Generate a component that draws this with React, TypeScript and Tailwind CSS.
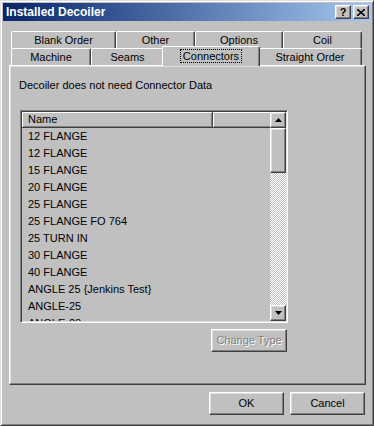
import React from "react";

const raised =
  "border border-t-white border-l-white border-r-[#404040] border-b-[#404040] shadow-[inset_-1px_-1px_0_#808080,inset_1px_1px_0_#dfdfdf]";
const sunken =
  "border border-t-[#808080] border-l-[#808080] border-r-white border-b-white shadow-[inset_1px_1px_0_#404040,inset_-1px_-1px_0_#dfdfdf]";

const tabBase =
  "h-[17px] flex items-center justify-center border-t border-l border-r border-t-white border-l-white border-r-[#404040] rounded-t-[2px] shadow-[inset_-1px_0_0_#808080] bg-[#c0c0c0]";

const rows = [
  "12 FLANGE",
  "12 FLANGE",
  "15 FLANGE",
  "20 FLANGE",
  "25 FLANGE",
  "25 FLANGE FO 764",
  "25 TURN IN",
  "30 FLANGE",
  "40 FLANGE",
  "ANGLE 25 {Jenkins Test}",
  "ANGLE-25",
  "ANGLE-28",
];

const Arrow = ({ up }: { up?: boolean }) => (
  <svg width="7" height="4" viewBox="0 0 7 4">
    {up ? <polygon points="3.5,0 7,4 0,4" fill="#000" /> : <polygon points="0,0 7,0 3.5,4" fill="#000" />}
  </svg>
);

const App: React.FC = () => {
  return (
    <div
      className="w-[374px] h-[426px] bg-[#c0c0c0] border border-t-[#dfdfdf] border-l-[#dfdfdf] border-r-[#404040] border-b-[#404040] shadow-[inset_1px_1px_0_#fff,inset_-1px_-1px_0_#808080] p-[2px] flex flex-col text-[11px] text-black"
      style={{ fontFamily: '"Liberation Sans", Arial, sans-serif' }}
    >
      {/* TITLE BAR */}
      <div className="h-[18px] flex items-center justify-between bg-gradient-to-r from-[#0a246a] to-[#a6caf0] pl-[3px] pr-[2px]">
        <span className="text-white font-bold text-[12px] leading-none">Installed Decoiler</span>
        <div className="flex gap-[2px]">
          <div className={`w-[16px] h-[14px] bg-[#c0c0c0] flex items-center justify-center ${raised}`}>
            <span className="font-bold text-[11px] leading-none">?</span>
          </div>
          <div className={`w-[16px] h-[14px] bg-[#c0c0c0] flex items-center justify-center ${raised}`}>
            <svg width="8" height="7" viewBox="0 0 8 7">
              <path d="M0 0 L8 7 M8 0 L0 7" stroke="#000" strokeWidth="1.6" />
            </svg>
          </div>
        </div>
      </div>

      {/* TABS */}
      <div className="mt-[10px] ml-[6px] flex flex-col">
        <div className="ml-[2px] flex w-[351px]">
          <div className={`${tabBase} w-[105px]`}>Blank Order</div>
          <div className={`${tabBase} w-[79px]`}>Other</div>
          <div className={`${tabBase} w-[88px]`}>Options</div>
          <div className={`${tabBase} w-[79px]`}>Coil</div>
        </div>
        <div className="ml-[2px] flex items-end w-[351px] h-[17px] relative z-10">
          <div className={`${tabBase} w-[80px]`}>Machine</div>
          <div className={`${tabBase} w-[73px]`}>Seams</div>
          <div className={`${tabBase} w-[98px] h-[20px] -mx-[2px] -mb-[1px] z-10 items-start pt-[2px]`}>
            <span className="border border-dotted border-black px-[2px] leading-[12px]">Connectors</span>
          </div>
          <div className={`${tabBase} w-[104px]`}>Straight Order</div>
        </div>

        {/* PANEL */}
        <div className={`w-[357px] h-[320px] ${raised} flex flex-col`}>
          <div className="mt-[11px] ml-[9px]">Decoiler does not need Connector Data</div>

          <div className="mt-[16px] ml-[10px] flex flex-col items-start">
            <div className={`w-[268px] h-[213px] ${sunken} p-[1px] flex`}>
              <div className="flex-1 flex flex-col overflow-hidden">
                <div className="flex h-[16px]">
                  <div className="w-[191px] border-r border-b border-r-[#404040] border-b-[#404040] shadow-[inset_1px_1px_0_#fff,inset_-1px_-1px_0_#808080] pl-[6px] flex items-center">
                    Name
                  </div>
                  <div className="flex-1 border-b border-b-[#404040] shadow-[inset_1px_1px_0_#fff,inset_0_-1px_0_#808080]" />
                </div>
                <div className="flex flex-col">
                  {rows.map((r, i) => (
                    <div key={i} className="h-[17px] pl-[6px] flex items-center whitespace-nowrap">
                      {r}
                    </div>
                  ))}
                </div>
              </div>
              <div className="w-[16px] flex flex-col">
                <div className={`h-[16px] bg-[#c0c0c0] flex items-center justify-center ${raised}`}>
                  <Arrow up />
                </div>
                <div className={`h-[45px] bg-[#c0c0c0] ${raised}`} />
                <div className="flex-1 bg-[repeating-conic-gradient(#fff_0_25%,#c0c0c0_0_50%)] bg-[length:2px_2px]" />
                <div className={`h-[16px] bg-[#c0c0c0] flex items-center justify-center ${raised}`}>
                  <Arrow />
                </div>
              </div>
            </div>
            <div
              className={`mt-[6px] ml-[191px] w-[76px] h-[23px] ${raised} flex items-center justify-center text-[#808080] [text-shadow:1px_1px_0_#fff]`}
            >
              Change Type
            </div>
          </div>
        </div>
      </div>

      {/* BOTTOM BUTTONS */}
      <div className="mt-[7px] flex justify-end gap-[6px] pr-[6px]">
        <button className={`w-[75px] h-[23px] ${raised} bg-[#c0c0c0]`}>OK</button>
        <button className={`w-[75px] h-[23px] ${raised} bg-[#c0c0c0]`}>Cancel</button>
      </div>
    </div>
  );
};

export default App;
